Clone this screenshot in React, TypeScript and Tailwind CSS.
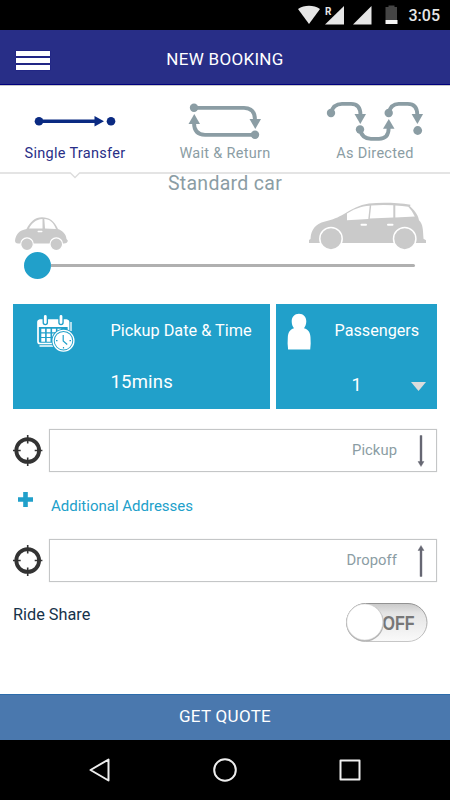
import { useState } from "react";
import type { ReactNode } from "react";

function StatusBar() {
  return (
    <div className="flex h-[30px] items-center justify-end bg-black pr-2.5 text-[#e6e6e6]">
      <svg width="102" height="30" viewBox="0 0 102 30" fill="currentColor" aria-hidden>
        <path d="M1 9C7.500 4.800 16.500 4.800 23 9L12 24z" />
        <path d="M47 6v18.500H28z" />
        <rect x="27" y="5" width="8" height="11" fill="#000" />
        <text x="28" y="15" fontSize="10" fontWeight="700" fontFamily="Roboto, sans-serif">R</text>
        <path d="M74.500 6v18.500H56z" />
        <path d="M91.500 5.500h6v1.500h2.500v13H88.500V7h3z" fill="#454545" />
        <rect x="88.500" y="20" width="12" height="4" fill="#f4f4f4" />
      </svg>
      <span className="ml-[10px] pt-px text-[16px] leading-[30px] font-medium">3:05</span>
    </div>
  );
}

function SingleIcon() {
  return (
    <svg width="150" height="56" viewBox="0 0 150 56" fill="#0a2a82" aria-hidden>
      <circle cx="39" cy="35.200" r="4.300" />
      <path d="M39 33.500h55.500v-3.500l9.500 5.200-9.500 5.200v-3.500H39z" />
      <circle cx="111" cy="35.200" r="4.300" />
    </svg>
  );
}

function ReturnIcon() {
  return (
    <svg width="150" height="56" viewBox="0 0 150 56" fill="#8b9da4" aria-hidden>
      <g fill="none" stroke="#8b9da4" strokeWidth="3.800">
        <path d="M44 21.800h50q11 0 11 12" />
        <path d="M105 48.800H55q-11 0-11-12" />
      </g>
      <circle cx="44" cy="21.800" r="4.200" />
      <circle cx="105" cy="48.800" r="4.200" />
      <path d="M99.500 33h11.500l-5.700 10z" />
      <path d="M38.500 38h11.500l-5.700-10z" />
    </svg>
  );
}

function DirectedIcon() {
  return (
    <svg width="150" height="56" viewBox="0 0 150 56" fill="#8b9da4" aria-hidden>
      <g fill="none" stroke="#8b9da4" strokeWidth="3.800">
        <path d="M31 27q2-9.200 11-9.200h9q9.500 0 9.500 11" />
        <path d="M60 43.500q2 9.300 11 9.300h8q9.700 0 9.700-11" />
        <path d="M88.700 27q2-9.200 10-9.200h9q9.600 0 9.600 11" />
      </g>
      <circle cx="31" cy="27" r="4.200" />
      <circle cx="60" cy="43.500" r="4.200" />
      <circle cx="88.700" cy="27" r="4.200" />
      <circle cx="117.700" cy="44.500" r="4.400" />
      <path d="M54.500 28h11.500l-5.700 10z" />
      <path d="M83 42.800h11.500L88.800 33z" />
      <path d="M111.600 28h11.500l-5.700 10z" />
    </svg>
  );
}

function SmallCar() {
  return (
    <svg width="53" height="33" viewBox="0 0 53 33" aria-hidden>
      <path
        d="M0 23.500C1 17 4 13.500 11.500 12 15 5 20 .3 27 .3S39.500 4 43 12c5 2 8 5 8.500 10l1.300 1.500c0 2-1.500 3-4 3H3c-2 0-3-1-3-3z"
        fill="#cacaca"
      />
      <path d="M14 11.500C17 6 20.500 2.500 27.500 2v9.500zM29.300 2C35 2.300 38.500 5.500 41 12l-11-.5z" fill="#fff" />
      <rect x="22.500" y="13.800" width="5" height="1.500" rx=".7" fill="#fff" />
      <circle cx="12" cy="27.200" r="6.300" fill="#cacaca" stroke="#fff" strokeWidth="1.200" />
      <circle cx="41.300" cy="27.200" r="6.300" fill="#cacaca" stroke="#fff" strokeWidth="1.200" />
    </svg>
  );
}

function LargeCar() {
  return (
    <svg width="119" height="48" viewBox="0 0 119 48" aria-hidden>
      <path
        d="M1 41v-3l1.500-1C3 28 7 22 17 19.500c8-2 13-4 19-7.500C44 7 51 3 61 1.500c13-1.200 28-.8 41.500 1.300l-.5 1.500c4 4 8 8 9 14 4 4 4 9 4.500 18.500l2.500 1.500V41z"
        fill="#cacaca"
      />
      <g fill="#fff">
        <path d="M39 18.200v-6.700C46 7 53 4.300 61.700 3.700L60.300 17z" />
        <path d="M63.200 3.500q11-1 22.100-.2v12.300l-23.500 1z" />
        <path d="M87.300 3.500q7 .2 13 1.200 4 4 6.500 9.800l-19.500 1.100z" />
        <rect x="52.500" y="21.800" width="6.500" height="2" rx="1" />
        <rect x="79" y="21.800" width="6.500" height="2" rx="1" />
      </g>
      <circle cx="23" cy="36.700" r="11.200" fill="#cacaca" stroke="#fff" strokeWidth="1.500" />
      <circle cx="96.700" cy="36.700" r="11.200" fill="#cacaca" stroke="#fff" strokeWidth="1.500" />
    </svg>
  );
}

function CalendarIcon() {
  return (
    <svg width="39" height="38" viewBox="0 0 39 38" aria-hidden>
      <rect x="1" y="5.300" width="30.500" height="23.200" rx="2" fill="none" stroke="#fff" strokeWidth="1.700" />
      <path d="M1 6.500q0-2 2-2h26.500q2 0 2 2V12H1z" fill="#fff" />
      <g stroke="#21a0ca" strokeWidth="5.500" strokeLinecap="round">
        <path d="M8.300 2.500v5M24 2.500v5" />
      </g>
      <g stroke="#fff" strokeWidth="2.800" strokeLinecap="round">
        <path d="M8.300 1.500v6M24 1.500v6" />
      </g>
      <g stroke="#fff" strokeWidth="3.600" strokeDasharray="3.800 1.600">
        <path d="M4.300 15.500h20.500M4.300 20.200h20.500M4.300 24.900h20.500" />
      </g>
      <path d="M34 7v9M2.500 31h15" fill="none" stroke="#fff" strokeWidth="1.300" />
      <circle cx="26.500" cy="25.700" r="12" fill="#21a0ca" />
      <circle cx="26.500" cy="25.700" r="10.400" fill="none" stroke="#fff" strokeWidth="1.300" />
      <circle cx="26.500" cy="25.700" r="8.800" fill="#fff" />
      <path d="M26.200 20v6l4 3.500M26.500 32v1.500M19 25.700h1.500M32.500 25.700H34" fill="none" stroke="#21a0ca" strokeWidth="1.200" />
    </svg>
  );
}

function PersonIcon() {
  return (
    <svg width="24" height="37" viewBox="0 0 24 37" fill="#fff" aria-hidden>
      <path d="M12 .8c4.500 0 7.300 3.200 7.300 7.400 0 3-1 5.300-2.300 7 4.500 1.300 6.300 4.300 6.500 9.300l.2 6-.5 6H1.100l-.5-6 .2-6c.2-5 2-8 6.200-9.300-1.500-1.700-2.300-4-2.300-7C4.700 4 7.500.8 12 .8z" />
    </svg>
  );
}

function TargetIcon() {
  return (
    <svg width="30" height="31" viewBox="0 0 30 31" fill="none" stroke="#333" aria-hidden>
      <circle cx="14.700" cy="15.500" r="11.400" strokeWidth="3.800" />
      <path d="M14.700 0v8.500M14.700 22.500V31M0 15.500H7.700M21.700 15.500h7.700" strokeWidth="1.600" />
    </svg>
  );
}

function ArrowIcon({ up }: { up?: boolean }) {
  return (
    <svg width="8" height="32" viewBox="0 0 8 32" fill="#666873" className={up ? "rotate-180" : ""} aria-hidden>
      <path d="M3 .5h2v26h2L4 31.500 1 26.500h2z" stroke="#666873" strokeWidth=".4" />
    </svg>
  );
}

function Tab({ label, icon, active }: { label: string; icon: ReactNode; active?: boolean }) {
  return (
    <button className={`flex w-[150px] flex-col items-center ${active ? "text-[#282e87]" : "text-[#8b9da4]"}`}>
      {icon}
      <span className="text-[14.500px] leading-6 tracking-[0.3px] whitespace-nowrap">{label}</span>
    </button>
  );
}

function AddressRow({ label, up }: { label: string; up?: boolean }) {
  return (
    <div className="flex h-[43px] items-center">
      <TargetIcon />
      <div className="ml-1.5 flex h-[43px] flex-1 items-center justify-end border border-[#c4c6c7] pr-[11px] shadow-[0_0_1px_#ddd]">
        <span className="mr-[20px] text-[14.800px] tracking-[0.050px] text-[#8b9da4]">{label}</span>
        <ArrowIcon up={up} />
      </div>
    </div>
  );
}

function Toggle({ on, onClick }: { on: boolean; onClick: () => void }) {
  return (
    <button onClick={onClick} aria-pressed={on}>
      <svg width="84" height="42" viewBox="0 0 84 42" aria-hidden>
        <defs>
          <linearGradient id="track" x1="0" y1="0" x2="0" y2="1">
            <stop offset="0" stopColor="#c9c9c9" />
            <stop offset=".25" stopColor="#e4e4e4" />
            <stop offset="1" stopColor="#fafafa" />
          </linearGradient>
          <linearGradient id="edge" x1="0" y1="0" x2="0" y2="1">
            <stop offset="0" stopColor="#929292" />
            <stop offset="1" stopColor="#c6c6c6" />
          </linearGradient>
        </defs>
        <rect x="1.500" y="1.500" width="80.500" height="38" rx="19" fill="url(#track)" stroke="url(#edge)" />
        <text
          x={on ? 14 : 37.500}
          y="28"
          fontSize="21"
          fontWeight="700"
          fontFamily="Liberation Sans, sans-serif"
          fill="#777"
          textLength="32"
          lengthAdjust="spacingAndGlyphs"
        >
          {on ? "ON" : "OFF"}
        </text>
        <circle cx={on ? 63.500 : 20} cy="20.800" r="18.800" fill="#b2b2b2" />
        <circle cx={on ? 63.500 : 19.800} cy="20" r="18" fill="#fff" stroke="#d4d4d4" strokeWidth=".6" />
      </svg>
    </button>
  );
}

export default function App() {
  const [rideShare, setRideShare] = useState(false);

  return (
    <div className="flex h-[800px] w-[450px] flex-col overflow-hidden bg-white font-['Roboto',sans-serif]">
      <StatusBar />

      <header className="flex h-[55px] items-center border-b border-[#00007d] bg-[#282e87] px-4">
        <button className="flex w-[34px] flex-col gap-[2px] pt-1.5" aria-label="Menu">
          <span className="h-[5px] w-full bg-white shadow-[0_0_1px_#00007d]" />
          <span className="h-[5px] w-full bg-white shadow-[0_0_1px_#00007d]" />
          <span className="h-[5px] w-full bg-white shadow-[0_0_1px_#00007d]" />
        </button>
        <h1 className="mr-[34px] flex-1 pt-[5px] text-center text-[17px] tracking-[0.3px] text-white">NEW BOOKING</h1>
      </header>

      {/* Transfer type */}
      <nav className="relative flex h-[89px] border-t border-b-2 border-t-[#c8c8c8] border-b-[#e4e4e4]">
        <Tab label="Single Transfer" icon={<SingleIcon />} active />
        <Tab label="Wait & Return" icon={<ReturnIcon />} />
        <Tab label="As Directed" icon={<DirectedIcon />} />
        <svg className="absolute top-[85px] left-[70px]" width="10" height="8" viewBox="0 0 10 8" aria-hidden>
          <path d="M0 0h10v1.500L5 6.500 0 1.500z" fill="#fff" />
          <path d="M0 1.500l5 5 5-5" fill="none" stroke="#ddd" strokeWidth="1.300" />
        </svg>
      </nav>

      <main className="flex flex-1 flex-col">
        <h2 className="h-[28px] text-center text-[19.500px] leading-[19px] tracking-[0.3px] text-[#8b9da4]">Standard car</h2>
        <div className="flex h-[48px] items-end justify-between pr-[23px] pl-[15px]">
          <SmallCar />
          <LargeCar />
        </div>
        <div className="flex h-[30px] items-center pr-[35px] pl-[24px]">
          <span className="size-[27px] rounded-full bg-[#21a0ca]" />
          <span className="h-[3px] flex-1 rounded-r-full bg-[#b0b0b0]" />
        </div>

        <div className="mt-[24px] flex h-[105px] gap-1.5 pr-[13px] pl-[13px] text-white">
          <section className="flex w-[257px] bg-[#21a0ca] pt-[11px] pl-6">
            <CalendarIcon />
            <div className="ml-[34.500px] flex flex-col whitespace-nowrap">
              <span className="pt-[4px] text-[16.300px] leading-6">Pickup Date &amp; Time</span>
              <span className="mt-[25px] text-[18.500px] leading-7 tracking-[0.2px]">15mins</span>
            </div>
          </section>
          <section className="flex flex-1 bg-[#21a0ca] pt-[9px] pl-[11px]">
            <PersonIcon />
            <div className="ml-[23.500px] flex flex-1 flex-col">
              <span className="pt-[6px] text-[16.200px] leading-6">Passengers</span>
              <div className="mt-[28px] flex items-center justify-between pr-[11px] pl-[17px]">
                <span className="text-[18px] leading-7">1</span>
                <svg width="15" height="9" viewBox="0 0 15 9" className="mt-0.5" fill="#dcdcdc" aria-hidden>
                  <path d="M0 0h15L7.500 9z" />
                </svg>
              </div>
            </div>
          </section>
        </div>

        {/* Addresses */}
        <div className="mt-5 flex flex-col pr-[13px] pl-[13px]">
          <AddressRow label="Pickup" />
          <button className="flex h-[67px] text-[#21a0ca]">
            <svg width="15" height="15" viewBox="0 0 15 15" className="mt-5 ml-[5px]" fill="currentColor" aria-hidden>
              <path d="M5.200 0h4.600v5.200H15v4.600H9.800V15H5.200V9.800H0V5.200h5.200z" />
            </svg>
            <span className="mt-[22px] ml-[18px] text-[15px] leading-6">Additional Addresses</span>
          </button>
          <AddressRow label="Dropoff" up />
        </div>

        <div className="mt-[20px] flex justify-between pr-[21px] pl-[13px]">
          <span className="pt-px text-[16.300px] leading-6 text-[#16324a]">Ride Share</span>
          <Toggle on={rideShare} onClick={() => setRideShare(!rideShare)} />
        </div>
      </main>

      <button className="h-[46px] border-t border-[#2c6cab] bg-[#4a78ae] pb-px text-[17px] tracking-[0.3px] text-white">GET QUOTE</button>

      <footer className="flex h-[60px] items-center justify-between bg-black px-[88px]">
        <svg width="24" height="26" viewBox="0 0 24 26" fill="none" stroke="#eee" strokeWidth="2" strokeLinejoin="round" aria-hidden>
          <path d="M20.500 2.500v21L2.500 13z" />
        </svg>
        <svg width="26" height="26" viewBox="0 0 26 26" fill="none" stroke="#eee" strokeWidth="2" aria-hidden>
          <circle cx="13" cy="13" r="10.800" />
        </svg>
        <svg width="24" height="24" viewBox="0 0 24 24" fill="none" stroke="#eee" strokeWidth="2" strokeLinejoin="round" aria-hidden>
          <rect x="2.500" y="2.500" width="19" height="19" />
        </svg>
      </footer>
    </div>
  );
}
